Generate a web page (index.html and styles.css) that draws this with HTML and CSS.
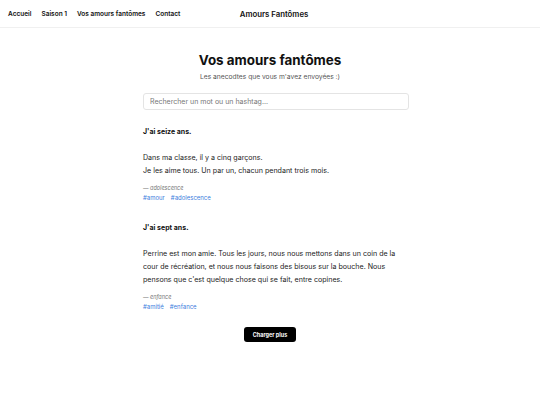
FILE: index.html
```html
<!DOCTYPE html>
<html lang="fr">
<head>
<meta charset="utf-8">
<title>Amours Fantômes</title>
<link rel="stylesheet" href="styles.css">
</head>
<body>
<header class="nav">
  <nav class="nav-links">
    <a href="#">Accueil</a>
    <a href="#">Saison 1</a>
    <a href="#">Vos amours fantômes</a>
    <a href="#">Contact</a>
  </nav>
  <div class="brand">Amours Fantômes</div>
  <div class="nav-spacer"></div>
</header>
<main class="page">
  <h1 class="title">Vos amours fantômes</h1>
  <p class="subtitle">Les anecodtes que vous m'avez envoyées :)</p>
  <div class="column">
    <input class="search" type="text" placeholder="Rechercher un mot ou un hashtag...">
    <article class="post">
      <h2 class="post-title">J'ai seize ans.</h2>
      <p class="post-body">Dans ma classe, il y a cinq garçons.<br>Je les aime tous. Un par un, chacun pendant trois mois.</p>
      <p class="post-meta">— adolescence</p>
      <p class="tags"><a href="#">#amour</a><a href="#">#adolescence</a></p>
    </article>
    <article class="post">
      <h2 class="post-title">J'ai sept ans.</h2>
      <p class="post-body">Perrine est mon amie. Tous les jours, nous nous mettons dans un coin de la cour de récréation, et nous nous faisons des bisous sur la bouche. Nous pensons que c'est quelque chose qui se fait, entre copines.</p>
      <p class="post-meta">— enfance</p>
      <p class="tags"><a href="#">#amitié</a><a href="#">#enfance</a></p>
    </article>
    <div class="more-wrap"><button class="more">Charger plus</button></div>
  </div>
</main>
</body>
</html>
```
FILE: styles.css
```css
* { box-sizing: border-box; }
html, body { margin: 0; padding: 0; background: #fff; }
body {
  font-family: Inter, "Liberation Sans", sans-serif;
  color: #111;
}
.nav {
  display: grid;
  grid-template-columns: 1fr auto 1fr;
  align-items: center;
  height: 28px;
  padding: 0 0 0 8px;
  border-bottom: 1px solid #f0f0f0;
}
.nav-links { display: flex; gap: 10px; }
.nav-links a {
  font-size: 6.5px;
  font-weight: 600;
  color: #111;
  text-decoration: none;
}
.brand {
  font-size: 7.8px;
  font-weight: 600;
  color: #111;
}
.page { padding-top: 23px; }
.title {
  margin: 0;
  text-align: center;
  font-size: 13.4px;
  font-weight: 700;
  line-height: 18px;
  color: #111;
}
.subtitle {
  margin: 3px 0 0;
  text-align: center;
  font-size: 6.7px;
  line-height: 10px;
  color: #555;
}
.column {
  width: 278px;
  padding-left: 12px;
  margin: 0 auto;
}
.search {
  display: block;
  width: 266px;
  height: 17px;
  margin-top: 11px;
  padding: 0 6px;
  border: 1px solid #e4e4e4;
  border-radius: 3px;
  font-family: inherit;
  font-size: 7px;
  color: #333;
}
.search::placeholder { color: #777; }
.post { margin-top: 17px; }
.post + .post { margin-top: 21px; }
.post-title {
  margin: 0;
  font-size: 7px;
  font-weight: 700;
  line-height: 10px;
}
.post-body {
  margin: 14px 0 0;
  font-size: 7.1px;
  line-height: 13px;
  color: #222;
  max-width: 266px;
}
.post-meta {
  margin: 7px 0 0;
  font-size: 5.5px;
  font-style: italic;
  color: #777;
  line-height: 8px;
}
.tags {
  margin: 1px 0 0;
  display: flex;
  gap: 6px;
  font-size: 6px;
  line-height: 9px;
}
.tags a { color: #3b7ddd; text-decoration: none; }
.more-wrap { display: flex; justify-content: center; margin-top: 16px; padding-right: 12px; }
.more {
  background: #000;
  color: #fff;
  border: 0;
  border-radius: 3px;
  font-family: inherit;
  font-size: 5.5px;
  font-weight: 700;
  height: 15px;
  padding: 0 9px;
}
```
